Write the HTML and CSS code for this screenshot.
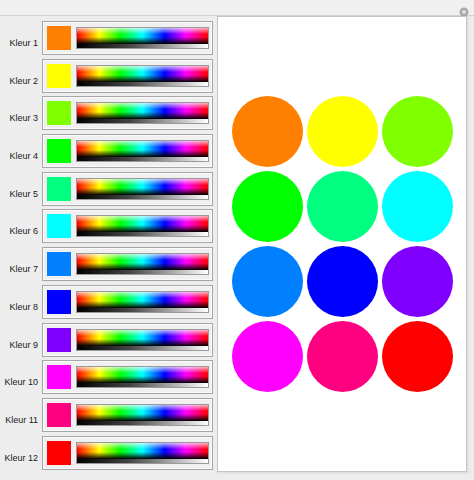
FILE: index.html
```html
<!DOCTYPE html>
<html>
<head>
<meta charset="utf-8">
<link rel="stylesheet" href="styles.css">
</head>
<body>
<div class="topbar">
  <svg class="close" width="10" height="10" viewBox="0 0 10 10"><circle cx="5" cy="5" r="4.5" fill="#a9a9a9"/><circle cx="5" cy="5" r="2" fill="#dedede"/></svg>
</div>
<div class="main">
  <div class="controls">
    <div class="row"><span class="label">Kleur 1</span><div class="box"><div class="swatch" style="background:#ff8000"></div><div class="grad"></div></div></div>
    <div class="row"><span class="label">Kleur 2</span><div class="box"><div class="swatch" style="background:#ffff00"></div><div class="grad"></div></div></div>
    <div class="row"><span class="label">Kleur 3</span><div class="box"><div class="swatch" style="background:#80ff00"></div><div class="grad"></div></div></div>
    <div class="row"><span class="label">Kleur 4</span><div class="box"><div class="swatch" style="background:#00ff00"></div><div class="grad"></div></div></div>
    <div class="row"><span class="label">Kleur 5</span><div class="box"><div class="swatch" style="background:#00ff80"></div><div class="grad"></div></div></div>
    <div class="row"><span class="label">Kleur 6</span><div class="box"><div class="swatch" style="background:#00ffff"></div><div class="grad"></div></div></div>
    <div class="row"><span class="label">Kleur 7</span><div class="box"><div class="swatch" style="background:#0080ff"></div><div class="grad"></div></div></div>
    <div class="row"><span class="label">Kleur 8</span><div class="box"><div class="swatch" style="background:#0000ff"></div><div class="grad"></div></div></div>
    <div class="row"><span class="label">Kleur 9</span><div class="box"><div class="swatch" style="background:#8000ff"></div><div class="grad"></div></div></div>
    <div class="row"><span class="label">Kleur 10</span><div class="box"><div class="swatch" style="background:#ff00ff"></div><div class="grad"></div></div></div>
    <div class="row"><span class="label">Kleur 11</span><div class="box"><div class="swatch" style="background:#ff0080"></div><div class="grad"></div></div></div>
    <div class="row"><span class="label">Kleur 12</span><div class="box"><div class="swatch" style="background:#ff0000"></div><div class="grad"></div></div></div>
  </div>
  <div class="panel">
    <div class="grid">
      <div class="dot" style="background:#ff8000"></div>
      <div class="dot" style="background:#ffff00"></div>
      <div class="dot" style="background:#80ff00"></div>
      <div class="dot" style="background:#00ff00"></div>
      <div class="dot" style="background:#00ff80"></div>
      <div class="dot" style="background:#00ffff"></div>
      <div class="dot" style="background:#0080ff"></div>
      <div class="dot" style="background:#0000ff"></div>
      <div class="dot" style="background:#8000ff"></div>
      <div class="dot" style="background:#ff00ff"></div>
      <div class="dot" style="background:#ff0080"></div>
      <div class="dot" style="background:#ff0000"></div>
    </div>
  </div>
</div>
</body>
</html>
```
FILE: styles.css
```css
html, body {
  margin: 0;
  padding: 0;
  width: 474px;
  height: 480px;
  overflow: hidden;
  background: #ededed;
  font-family: "Liberation Sans", Arial, sans-serif;
}
.topbar {
  height: 15px;
  border-bottom: 1px solid #d2d2d2;
  background: #f0f0f0;
  display: flex;
  justify-content: flex-end;
  align-items: center;
  padding-right: 5px;
}
.close {
  display: block;
  margin-top: 9px;
}
.main {
  display: flex;
  align-items: flex-start;
}
.controls {
  display: flex;
  flex-direction: column;
  gap: 3.7px;
  padding-top: 5px;
  width: 217px;
}
.row {
  display: flex;
  align-items: center;
}
.label {
  width: 38px;
  text-align: right;
  font-size: 9px;
  color: #1a1a1a;
  padding-top: 10px;
  margin-right: 4px;
  white-space: nowrap;
}
.box {
  width: 165px;
  height: 28px;
  border: 1px solid #a6a6a6;
  box-shadow: inset 0 0 0 1px #fafafa;
  background: #f0f0f0;
  display: flex;
  align-items: flex-start;
  padding: 4px 0 0 4px;
  box-sizing: content-box;
}
.swatch {
  width: 24px;
  height: 24px;
  flex: none;
}
.grad {
  margin-left: 5px;
  margin-top: 1px;
  width: 133px;
  height: 22px;
  box-sizing: border-box;
  border: 1px solid #9a9a9a;
  background:
    linear-gradient(to right, #000 0%, #444 40%, #fff 100%) bottom / 100% 4px no-repeat,
    linear-gradient(to bottom, rgba(255,255,255,0.7) 0%, rgba(255,255,255,0) 30%, rgba(0,0,0,0) 45%, rgba(0,0,0,1) 80%, #000 100%),
    linear-gradient(to right, #f00 0%, #ff0 17%, #0f0 33%, #0ff 50%, #00f 67%, #f0f 83%, #f00 100%);
}
.panel {
  width: 250px;
  height: 456px;
  box-sizing: border-box;
  background: #fff;
  border: 1px solid #c4c4c4;
  box-shadow: 1px 1px 0 1px #e2e2e2;
  display: flex;
  align-items: center;
  justify-content: center;
}
.grid {
  display: grid;
  grid-template-columns: repeat(3, 71px);
  grid-auto-rows: 71px;
  gap: 4px;
  margin-left: 1px;
}
.dot {
  border-radius: 50%;
}
```
